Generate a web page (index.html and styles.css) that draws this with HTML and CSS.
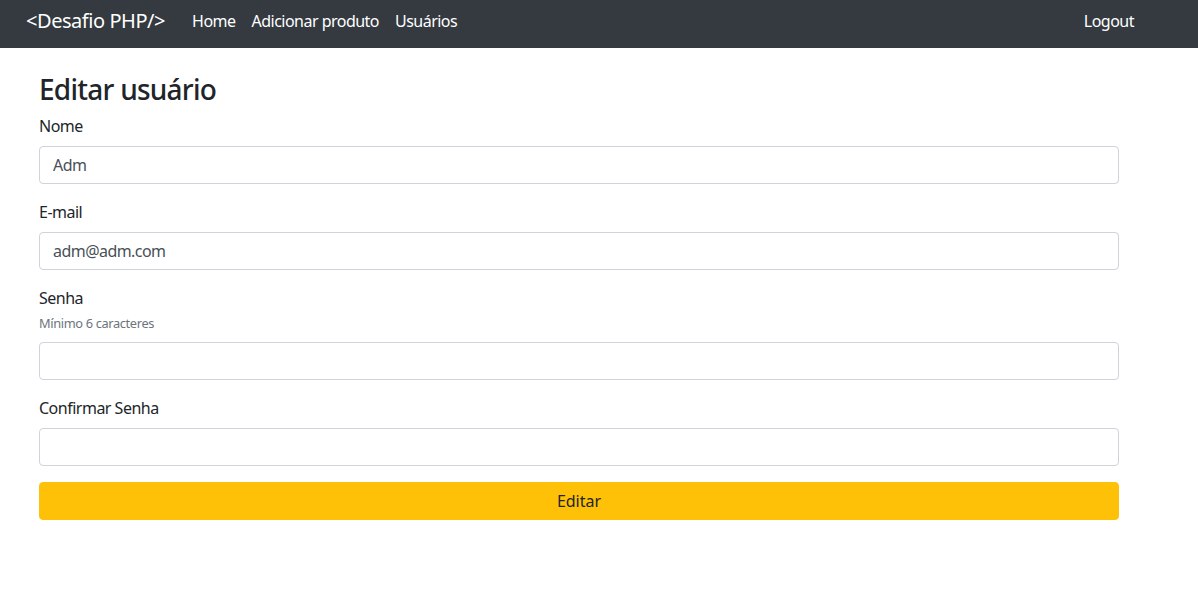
FILE: index.html
```html
<!DOCTYPE html>
<html lang="pt-BR">
<head>
<meta charset="utf-8">
<title>Editar usuário</title>
<link rel="stylesheet" href="styles.css">
</head>
<body>
<nav class="navbar">
  <a class="brand" href="#">&lt;Desafio PHP/&gt;</a>
  <ul class="nav-links">
    <li><a href="#">Home</a></li>
    <li><a href="#">Adicionar produto</a></li>
    <li><a href="#">Usuários</a></li>
  </ul>
  <a class="logout" href="#">Logout</a>
</nav>
<main class="container">
  <h2 class="title">Editar usuário</h2>
  <form class="form">
    <div class="form-group">
      <label for="nome">Nome</label>
      <input id="nome" type="text" value="Adm">
    </div>
    <div class="form-group">
      <label for="email">E-mail</label>
      <input id="email" type="email" value="adm@adm.com">
    </div>
    <div class="form-group">
      <label for="senha">Senha<br><small class="hint">Mínimo 6 caracteres</small></label>
      <input id="senha" type="password">
    </div>
    <div class="form-group">
      <label for="conf">Confirmar Senha</label>
      <input id="conf" type="password">
    </div>
    <button type="button" class="btn-warning">Editar</button>
  </form>
</main>
</body>
</html>
```
FILE: styles.css
```css
* { box-sizing: border-box; }
html, body { margin: 0; padding: 0; }
body {
  font-family: "Noto Sans", "Open Sans", sans-serif;
  font-size: 16px;
  line-height: 1.5;
  letter-spacing: -0.5px;
  color: #212529;
  background: #fff;
}
a { text-decoration: none; }
.navbar {
  display: flex;
  align-items: flex-start;
  height: 48px;
  background: #343a40;
  padding: 0 64px 0 26px;
}
.brand {
  color: #fff;
  font-size: 20px;
  line-height: 30px;
  letter-spacing: -0.45px;
  margin-top: 6px;
  margin-right: 19px;
}
.nav-links {
  display: flex;
  list-style: none;
  margin: 0;
  padding: 0;
  flex: 1;
}
.nav-links a {
  display: block;
  color: #fff;
  line-height: 24px;
  margin-top: 9px;
  padding: 0 8px;
  letter-spacing: -0.52px;
}
.logout {
  color: #fff;
  line-height: 24px;
  margin-top: 9px;
}
.container {
  width: 1080px;
  margin-left: 39px;
  padding-top: 24px;
}
.title {
  font-size: 28px;
  font-weight: 500;
  line-height: 34px;
  letter-spacing: -0.75px;
  margin: 0 0 8px;
}
.form-group { margin-bottom: 16px; }
label {
  display: inline-block;
  margin-bottom: 8px;
}
.hint {
  font-size: 12.8px;
  letter-spacing: -0.35px;
  color: #6c757d;
}
input {
  display: block;
  width: 100%;
  height: 38px;
  padding: 6px 13px;
  font: inherit;
  letter-spacing: -0.55px;
  color: #495057;
  background: #fff;
  border: 1px solid #ced4da;
  border-radius: 4px;
}
.btn-warning {
  display: block;
  width: 100%;
  height: 38px;
  font: inherit;
  color: #212529;
  background: #ffc107;
  border: 1px solid #ffc107;
  border-radius: 4px;
  padding: 6px 12px;
}
```
